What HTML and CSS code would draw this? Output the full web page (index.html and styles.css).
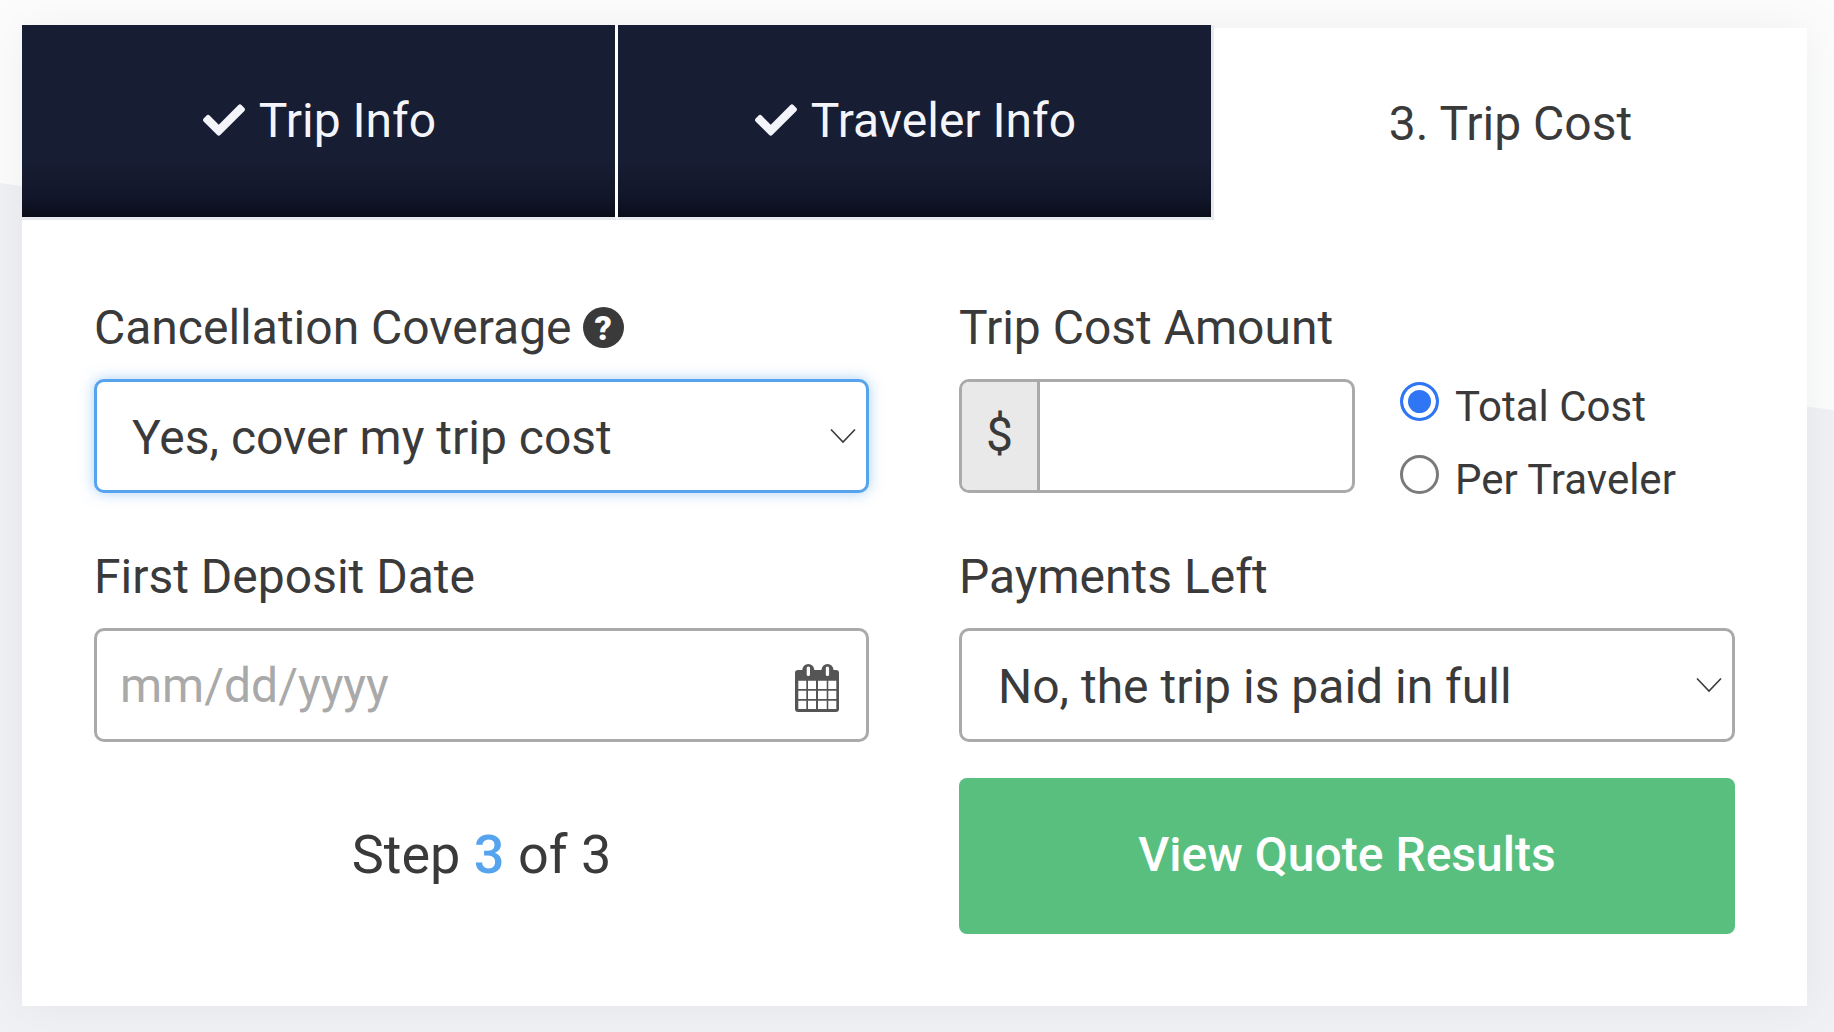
FILE: index.html
```html
<!DOCTYPE html>
<html lang="en">
  <head>
    <meta charset="utf-8">
    <title>Trip Cost</title>
    <link rel="stylesheet" href="styles.css">
  </head>
  <body>
    <svg class="wave" viewBox="0 0 1834 1032" preserveAspectRatio="none" aria-hidden="true">
      <path d="M0 183 C 300 225 1500 368 1834 410 L1834 1032 L0 1032 Z" fill="#f0f1f4"/>
    </svg>
    <div class="card">
      <div class="tabs">
        <div class="tab done">
          <svg class="check" viewBox="0 0 512 512"><path d="M173.898 439.404l-166.4-166.4c-9.997-9.997-9.997-26.206 0-36.204l36.203-36.204c9.997-9.998 26.207-9.998 36.204 0L192 312.69 432.095 72.596c9.997-9.997 26.207-9.997 36.204 0l36.203 36.204c9.997 9.997 9.997 26.206 0 36.204l-294.4 294.401c-9.998 9.997-26.207 9.997-36.204-.001z" fill="#f4f5fa"/></svg>
          <span>Trip Info</span>
        </div>
        <div class="tab done">
          <svg class="check" viewBox="0 0 512 512"><path d="M173.898 439.404l-166.4-166.4c-9.997-9.997-9.997-26.206 0-36.204l36.203-36.204c9.997-9.998 26.207-9.998 36.204 0L192 312.69 432.095 72.596c9.997-9.997 26.207-9.997 36.204 0l36.203 36.204c9.997 9.997 9.997 26.206 0 36.204l-294.4 294.401c-9.998 9.997-26.207 9.997-36.204-.001z" fill="#f4f5fa"/></svg>
          <span>Traveler Info</span>
        </div>
        <div class="tab current">3. Trip Cost</div>
      </div>
      <div class="form">
        <div class="field">
          <label class="label">Cancellation Coverage
            <span class="help">?</span>
          </label>
          <div class="control focus">
            <span class="value">Yes, cover my trip cost</span>
            <svg class="caret" viewBox="0 0 26 16"><path d="M1 1.5 L13 14 L25 1.5" fill="none" stroke="#3a3a3a" stroke-width="1.6"/></svg>
          </div>
        </div>
        <div class="field">
          <label class="label">Trip Cost Amount</label>
          <div class="amount-row">
            <div class="control amount">
              <span class="addon">$</span>
            </div>
            <div class="radios">
              <div class="radio-row"><span class="radio on"></span><span class="radio-text">Total Cost</span></div>
              <div class="radio-row"><span class="radio"></span><span class="radio-text">Per Traveler</span></div>
            </div>
          </div>
        </div>
        <div class="field">
          <label class="label">First Deposit Date</label>
          <div class="control date">
            <span class="placeholder">mm/dd/yyyy</span>
            <svg class="calendar" viewBox="0 0 44 48">
              <rect x="0" y="6" width="44" height="42" rx="3" fill="#555"/>
              <rect x="7.3" y="0" width="12" height="14" rx="6" fill="#555"/>
              <rect x="26.5" y="0" width="12" height="14" rx="6" fill="#555"/>
              <rect x="11.7" y="2.5" width="3.3" height="9.5" rx="1.6" fill="#fff"/>
              <rect x="30.8" y="2.5" width="3.3" height="9.5" rx="1.6" fill="#fff"/>
              <path d="M3.3 16.7 h8 v8.3 h-8 z M13 16.7 h8 v8.3 h-8 z M23 16.7 h8.7 v8.3 h-8.7 z M33.3 16.7 h8 v8.3 h-8 z M3.3 26.7 h8 v8.3 h-8 z M13 26.7 h8 v8.3 h-8 z M23 26.7 h8.7 v8.3 h-8.7 z M33.3 26.7 h8 v8.3 h-8 z M3.3 36.7 h8 v8.3 h-8 z M13 36.7 h8 v8.3 h-8 z M23 36.7 h8.7 v8.3 h-8.7 z M33.3 36.7 h8 v8.3 h-8 z" fill="#fff"/>
            </svg>
          </div>
        </div>
        <div class="field">
          <label class="label">Payments Left</label>
          <div class="control">
            <span class="value">No, the trip is paid in full</span>
            <svg class="caret" viewBox="0 0 26 16"><path d="M1 1.5 L13 14 L25 1.5" fill="none" stroke="#3a3a3a" stroke-width="1.6"/></svg>
          </div>
        </div>
        <div class="step">Step <b>3</b> of 3</div>
        <button class="submit">View Quote Results</button>
      </div>
    </div>
  </body>
</html>
```

FILE: styles.css
```css
html, body { margin: 0; height: 100%; }
body {
  position: relative;
  height: 1032px;
  overflow: hidden;
  background: #fcfcfc;
  font-family: Roboto, "Liberation Sans", sans-serif;
  color: #3a3a3a;
}
.wave { position: absolute; left: 0; top: 0; width: 1834px; height: 1032px; }

.card {
  position: relative;
  width: 1785px;
  height: 978px;
  margin: 28px 0 0 22px;
  background: #fff;
  box-shadow: 0 0 40px rgba(120, 125, 140, 0.1);
}

.tabs { display: flex; position: absolute; top: -3px; left: 0; right: 0; }
.tab { display: flex; align-items: center; justify-content: center; font-size: 48px; }
.tab.done {
  gap: 14px;
  box-sizing: border-box;
  width: 596px;
  height: 195px;
  padding: 0 0 2px 2px;
  border-bottom: 3px solid #e9eaed;
  background: linear-gradient(#171d33 0, #171d33 70%, #12162a 90%, #0a0c18 100%);
  color: #f4f5fa;
}
.tab.done:nth-child(1) { border-right: 3px solid #fff; }
.tab.done:nth-child(2) { border-right: 3px solid #e9eaed; }
.tab.current { flex: 1; padding-top: 6px; height: 184px; }
.check { width: 42px; height: 42px; }

.form {
  position: absolute;
  left: 72px;
  top: 270px;
  display: grid;
  grid-template-columns: 775px 776px;
  column-gap: 90px;
}
.field { height: 249px; }
.label { display: flex; align-items: center; gap: 11px; height: 59px; margin-bottom: 22px; font-size: 48px; }
.help {
  display: inline-flex;
  align-items: center;
  justify-content: center;
  width: 41px;
  height: 41px;
  border-radius: 50%;
  background: #3a3a3a;
  color: #fff;
  font-size: 34px;
  font-weight: 900;
}

.control {
  box-sizing: border-box;
  display: flex;
  align-items: center;
  justify-content: space-between;
  height: 114px;
  padding: 0 10px 0 36px;
  border: 3px solid #aaa;
  border-radius: 10px;
  background: #fff;
}
.control.focus {
  padding-left: 35px;
  border-color: #56a3ee;
  box-shadow: 0 0 14px rgba(86, 163, 238, 0.5);
}
.control.date { padding: 0 27px 0 23px; }
.value { margin-top: 2px; font-size: 48px; }
.placeholder { font-size: 48px; color: #a9a9a9; }
.caret { width: 26px; height: 16px; }
.calendar { width: 44px; height: 48px; margin-top: 6px; }

.amount-row { display: flex; }
.control.amount { width: 396px; padding: 0; overflow: hidden; justify-content: flex-start; }
.addon {
  display: flex;
  align-items: center;
  justify-content: center;
  box-sizing: border-box;
  width: 78px;
  height: 100%;
  padding-bottom: 3px;
  border-right: 3px solid #aaa;
  background: #e9e9e9;
  font-size: 48px;
}
.radios { margin-left: 45px; margin-top: 3px; font-size: 42px; }
.radio-row { display: flex; align-items: center; height: 39px; margin-bottom: 34px; gap: 16px; }
.radio-text { margin-top: 9px; }
.radio {
  box-sizing: border-box;
  width: 39px;
  height: 39px;
  border: 3px solid #7a7a7a;
  border-radius: 50%;
}
.radio.on {
  border-color: #2e76f4;
  background: #2e76f4;
  box-shadow: inset 0 0 0 5px #fff;
}

.step { display: flex; align-items: center; justify-content: center; white-space: pre; height: 156px; margin-top: -20px; font-size: 54px; }
.step b { font-weight: 500; color: #56a3ee; }
.submit {
  height: 156px;
  margin-top: -18px;
  padding-bottom: 4px;
  border: 0;
  border-radius: 8px;
  background: #58bf7e;
  color: #fff;
  font-family: inherit;
  font-size: 48px;
  font-weight: 500;
}
```
